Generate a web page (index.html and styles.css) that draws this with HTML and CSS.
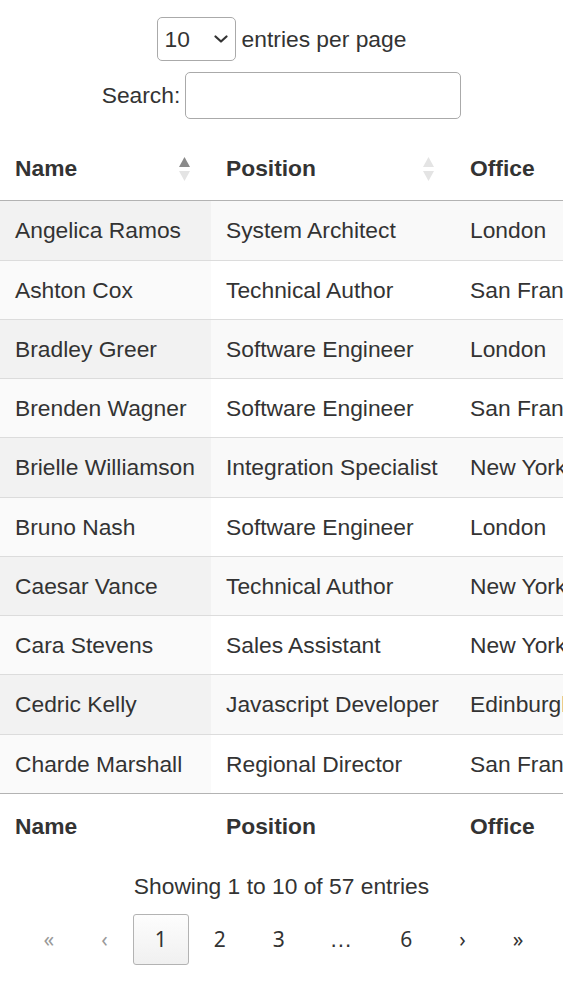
FILE: index.html
```html
<!DOCTYPE html>
<html lang="en">

<head>
    <meta charset="UTF-8">
    <meta name="viewport" content="width=device-width, initial-scale=1">
    <title>Employees</title>
    <link rel="stylesheet" href="styles.css">
</head>

<body>
    <div class="dt-container">
        <!-- Top controls: page length and search -->
        <div class="dt-length">
            <div class="select-wrap">
                <select id="lengthSelect" class="dt-input">
                    <option value="10" selected>10</option>
                    <option value="25">25</option>
                    <option value="50">50</option>
                    <option value="100">100</option>
                </select>
                <svg class="chevron" width="14" height="8" viewBox="0 0 14 8"><path d="M1.5 1.5 L7 6.5 L12.5 1.5" fill="none" stroke="#333" stroke-width="2.2" stroke-linecap="round" stroke-linejoin="round"/></svg>
            </div>
            <label for="lengthSelect">entries per page</label>
        </div>
        <div class="dt-search">
            <label for="searchInput">Search:</label>
            <input type="search" id="searchInput" class="dt-input">
        </div>

        <div class="dt-scroll">
            <table class="dataTable">
                <colgroup>
                    <col class="col-name">
                    <col class="col-position">
                    <col class="col-office">
                    <col class="col-age">
                    <col class="col-date">
                    <col class="col-salary">
                </colgroup>
                <thead>
                    <tr>
                        <th class="asc"><div class="th-inner"><span>Name</span><svg class="order" width="11" height="25" viewBox="0 0 11 25"><polygon class="up" points="5.5,0 11,10 0,10"/><polygon class="down" points="0,14 11,14 5.5,24"/></svg></div></th>
                        <th><div class="th-inner"><span>Position</span><svg class="order" width="11" height="25" viewBox="0 0 11 25"><polygon class="up" points="5.5,0 11,10 0,10"/><polygon class="down" points="0,14 11,14 5.5,24"/></svg></div></th>
                        <th><div class="th-inner"><span>Office</span><svg class="order" width="11" height="25" viewBox="0 0 11 25"><polygon class="up" points="5.5,0 11,10 0,10"/><polygon class="down" points="0,14 11,14 5.5,24"/></svg></div></th>
                        <th><div class="th-inner"><span>Age</span><svg class="order" width="11" height="25" viewBox="0 0 11 25"><polygon class="up" points="5.5,0 11,10 0,10"/><polygon class="down" points="0,14 11,14 5.5,24"/></svg></div></th>
                        <th><div class="th-inner"><span>Start date</span><svg class="order" width="11" height="25" viewBox="0 0 11 25"><polygon class="up" points="5.5,0 11,10 0,10"/><polygon class="down" points="0,14 11,14 5.5,24"/></svg></div></th>
                        <th><div class="th-inner"><span>Salary</span><svg class="order" width="11" height="25" viewBox="0 0 11 25"><polygon class="up" points="5.5,0 11,10 0,10"/><polygon class="down" points="0,14 11,14 5.5,24"/></svg></div></th>
                    </tr>
                </thead>
                <tbody>
                    <tr><td class="sorted">Angelica Ramos</td><td>System Architect</td><td>London</td><td>47</td><td>2009-10-09</td><td>$1,200,000</td></tr>
                    <tr><td class="sorted">Ashton Cox</td><td>Technical Author</td><td>San Francisco</td><td>66</td><td>2009-01-12</td><td>$86,000</td></tr>
                    <tr><td class="sorted">Bradley Greer</td><td>Software Engineer</td><td>London</td><td>41</td><td>2012-10-13</td><td>$132,000</td></tr>
                    <tr><td class="sorted">Brenden Wagner</td><td>Software Engineer</td><td>San Francisco</td><td>28</td><td>2011-06-07</td><td>$206,850</td></tr>
                    <tr><td class="sorted">Brielle Williamson</td><td>Integration Specialist</td><td>New York</td><td>61</td><td>2012-12-02</td><td>$372,000</td></tr>
                    <tr><td class="sorted">Bruno Nash</td><td>Software Engineer</td><td>London</td><td>38</td><td>2011-05-03</td><td>$163,500</td></tr>
                    <tr><td class="sorted">Caesar Vance</td><td>Technical Author</td><td>New York</td><td>21</td><td>2011-12-12</td><td>$106,450</td></tr>
                    <tr><td class="sorted">Cara Stevens</td><td>Sales Assistant</td><td>New York</td><td>46</td><td>2011-12-06</td><td>$145,600</td></tr>
                    <tr><td class="sorted">Cedric Kelly</td><td>Javascript Developer</td><td>Edinburgh</td><td>22</td><td>2012-03-29</td><td>$433,060</td></tr>
                    <tr><td class="sorted">Charde Marshall</td><td>Regional Director</td><td>San Francisco</td><td>36</td><td>2008-10-16</td><td>$470,600</td></tr>
                </tbody>
                <tfoot>
                    <tr>
                        <th>Name</th>
                        <th>Position</th>
                        <th>Office</th>
                        <th>Age</th>
                        <th>Start date</th>
                        <th>Salary</th>
                    </tr>
                </tfoot>
            </table>
        </div>

        <!-- Bottom: info and paging -->
        <div class="dt-info">Showing 1 to 10 of 57 entries</div>
        <nav class="dt-paging">
            <button class="dt-paging-button disabled">&laquo;</button>
            <button class="dt-paging-button disabled">&lsaquo;</button>
            <button class="dt-paging-button current">1</button>
            <button class="dt-paging-button">2</button>
            <button class="dt-paging-button">3</button>
            <span class="ellipsis">&hellip;</span>
            <button class="dt-paging-button">6</button>
            <button class="dt-paging-button">&rsaquo;</button>
            <button class="dt-paging-button">&raquo;</button>
        </nav>
    </div>
</body>

</html>
```

FILE: styles.css
```css
body {
    margin: 0;
    font-family: "Liberation Sans", Arial, sans-serif;
    font-size: 22.8px;
    color: #333333;
    background: #ffffff;
}

.dt-container {
    overflow: hidden;
}

.dt-length {
    display: flex;
    justify-content: center;
    align-items: center;
    gap: 6px;
    margin-top: 17px;
}

.select-wrap {
    position: relative;
    display: flex;
}

.dt-length select {
    box-sizing: border-box;
    width: 79px;
    height: 44px;
    padding: 0 7px;
    font-family: inherit;
    font-size: 22.8px;
    color: inherit;
    background-color: transparent;
    border: 1px solid #aaaaaa;
    border-radius: 5px;
    appearance: none;
    -webkit-appearance: none;
}

.chevron {
    position: absolute;
    right: 8px;
    top: 18px;
    pointer-events: none;
}

.dt-search {
    display: flex;
    justify-content: center;
    align-items: center;
    gap: 5px;
    margin-top: 11px;
}

.dt-search input {
    box-sizing: border-box;
    width: 276px;
    height: 47px;
    padding: 7px;
    font-family: inherit;
    font-size: 22.8px;
    color: inherit;
    background: transparent;
    border: 1px solid #aaaaaa;
    border-radius: 5px;
}

.dt-scroll {
    margin-top: 17px;
}

table.dataTable {
    table-layout: fixed;
    width: 1062px;
    border-collapse: separate;
    border-spacing: 0;
}

.col-name { width: 211px; }
.col-position { width: 244px; }
.col-office { width: 200px; }
.col-age { width: 100px; }
.col-date { width: 160px; }
.col-salary { width: 147px; }

table.dataTable th,
table.dataTable td {
    text-align: left;
    white-space: nowrap;
    overflow: hidden;
    line-height: 34.25px;
}

table.dataTable thead th {
    padding: 15px 21px 15px 15px;
    font-weight: bold;
    border-bottom: 1px solid #b3b3b3;
}

.th-inner {
    display: flex;
    justify-content: space-between;
    align-items: center;
}

.order {
    flex: none;
    margin-top: 3px;
}

.order polygon {
    fill: #e4e4e4;
}

th.asc .order .up {
    fill: #8a8a8a;
}

table.dataTable tbody td {
    padding: 12px 15px;
    border-top: 1px solid #dcdcdc;
}

table.dataTable tbody tr:first-child td {
    border-top: none;
}

table.dataTable tbody tr:nth-child(odd) td {
    background: #f9f9f9;
}

table.dataTable tbody tr:nth-child(odd) td.sorted {
    background: #f2f2f2;
}

table.dataTable tbody tr:nth-child(even) td.sorted {
    background: #fafafa;
}

table.dataTable tfoot th {
    padding: 15px;
    font-weight: bold;
    border-top: 1px solid #b3b3b3;
}

.dt-info {
    margin-top: 12px;
    text-align: center;
    line-height: 33.75px;
}

.dt-paging {
    display: flex;
    justify-content: center;
    align-items: center;
    margin-top: 10px;
    padding-left: 4px;
}

.dt-paging-button {
    box-sizing: border-box;
    min-width: 1.5em;
    margin-left: 3px;
    padding: 0.5em 1em;
    font-family: "Noto Sans", sans-serif;
    font-size: 21px;
    color: #333333;
    text-align: center;
    background: transparent;
    border: 1px solid transparent;
    border-radius: 3px;
    cursor: pointer;
}

.dt-paging-button:first-child {
    margin-left: 0;
}

.dt-paging-button.disabled {
    color: #999999;
    cursor: default;
}

.dt-paging-button.current {
    border-color: #b3b3b3;
    background: linear-gradient(to bottom, #fdfdfd 0%, #f0f0f0 100%);
}

.ellipsis {
    padding: 0 1em;
    color: #333333;
}
```
